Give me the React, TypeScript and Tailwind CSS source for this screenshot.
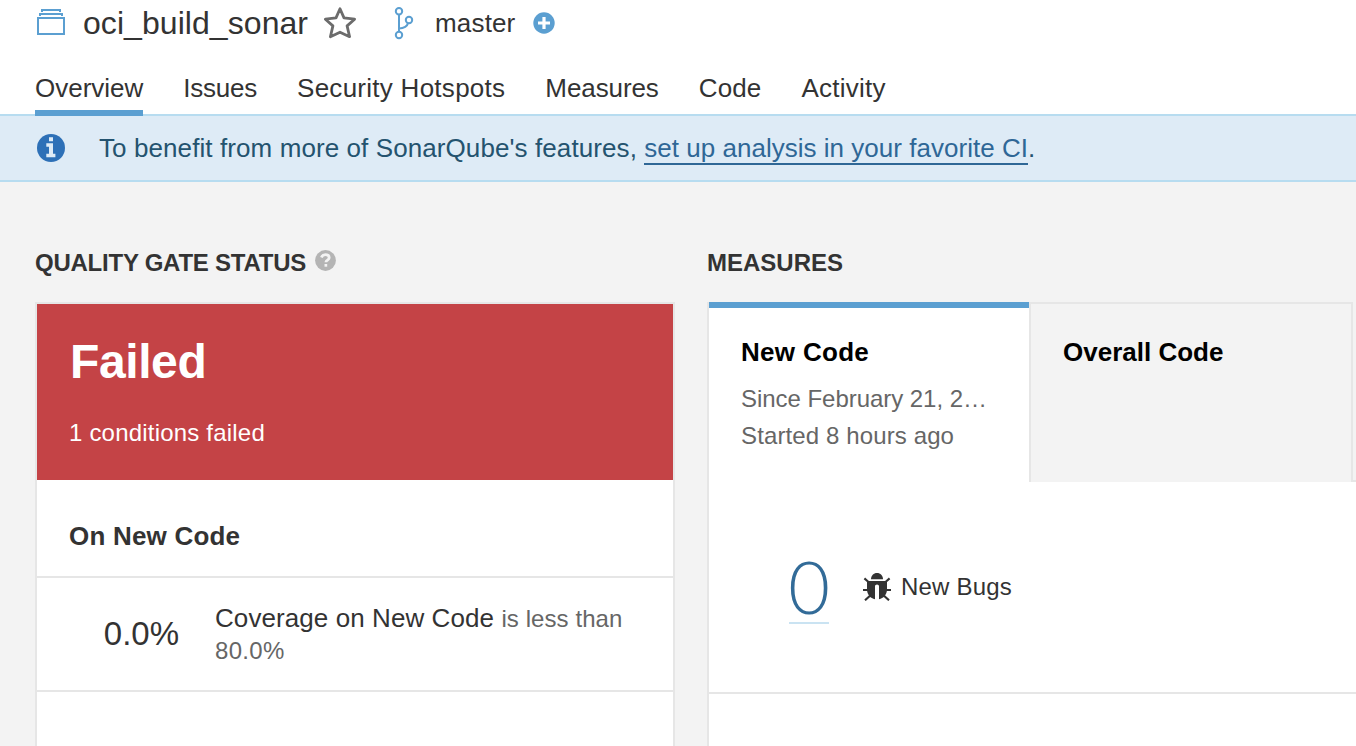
import React from "react";
import type { ReactNode } from "react";

function ProjectIcon() {
  return (
    <svg className="h-[32px] w-[32px] shrink-0" viewBox="0 0 32 32" fill="none" stroke="#5b9fd1" strokeWidth="2" shapeRendering="crispEdges">
      <path d="M3 11h26v16H3zM5 9V7h22v2M7 5V3h18v2" />
    </svg>
  );
}

function StarIcon() {
  return (
    <svg className="h-[32px] w-[34px] shrink-0" viewBox="0 0 34 32" fill="none" stroke="#6c6c6c" strokeWidth="2.8" strokeLinejoin="round">
      <path d="M17 1.700 21 10.900 31.600 12.200 24.100 18.900 26.600 29.700 17 25.200 7.400 29.700 9.900 18.900 2.400 12.200 13 10.900Z" />
    </svg>
  );
}

function BranchIcon() {
  return (
    <svg className="h-[34px] w-[20px] shrink-0" viewBox="0 0 20 34" fill="none" stroke="#5b9fd1" strokeWidth="2">
      <circle cx="5" cy="5.200" r="3.200" />
      <circle cx="5" cy="29" r="3.200" />
      <circle cx="15" cy="14" r="3.200" />
      <path d="M5 8.400V26M5 22.500C10 22.500 13.500 20 14 17" />
    </svg>
  );
}

function PlusIcon() {
  return (
    <svg className="h-[22px] w-[22px] shrink-0" viewBox="0 0 22 22">
      <circle cx="11" cy="11" r="10.700" fill="#5b9fd1" />
      <path d="M11 5v12M5 11h12" stroke="#fff" strokeWidth="3.200" />
    </svg>
  );
}

function InfoIcon() {
  return (
    <svg className="h-[28px] w-[28px] shrink-0" viewBox="0 0 28 28">
      <circle cx="14" cy="14" r="14" fill="#2d70b7" />
      <path d="M12 3.300h4v4h-4zM9.300 9.300H16v10.400h2.400v3.500H9.300v-3.500h2.700v-7H9.300z" fill="#deebf6" />
    </svg>
  );
}

function HelpIcon() {
  return (
    <svg className="h-[21px] w-[21px] shrink-0" viewBox="0 0 21 21">
      <circle cx="10.500" cy="10.500" r="10.400" fill="#b4b4b4" />
      <path d="M6.400 7.400C7.100 5.500 8.600 4.700 10.500 4.700c2 0 3.700 1.100 3.700 3 0 2.400-3.300 2.400-3.300 4.600" fill="none" stroke="#f3f3f3" strokeWidth="2.800" />
      <path d="M9.500 14h2.700v2.700H9.500z" fill="#f3f3f3" />
    </svg>
  );
}

function BugIcon() {
  return (
    <svg className="h-[28px] w-[28px] shrink-0" viewBox="0 0 28 28" fill="#333">
      <path d="M8 6.200C8 2.700 10.600 0 14 0s6 2.700 6 6.200z" />
      <path d="M4 8h20v8.500c0 5-3.600 9-8 9.700V13.200c0-1.100-.9-1.800-2-1.800s-2 .7-2 1.800v13c-4.400-.7-8-4.700-8-9.700z" />
      <path d="M1.400 5.400 5.500 9M26.600 5.400 22.500 9M0 17h5M28 17h-5M2 27.300l5-4.600M26 27.300l-5-4.600" fill="none" stroke="#333" strokeWidth="2.100" />
    </svg>
  );
}

function Tab({ children, className, active = false }: { children: ReactNode; className?: string; active?: boolean }) {
  return (
    <a className={`flex h-[50px] items-start border-b-[6px] pt-[3px] leading-[38px] ${active ? "border-[#5b9fd1]" : "border-transparent"} ${className ?? ""}`}>
      {children}
    </a>
  );
}

function Header() {
  return (
    <header className="relative z-10 flex h-[116px] flex-col justify-between pl-[35px]">
      <div className="flex h-[46px] items-center">
        <ProjectIcon />
        <h1 className="ml-4 text-[32px] leading-[46px] tracking-[0.06px]">oci_build_sonar</h1>
        <div className="ml-[15px] flex"><StarIcon /></div>
        <div className="ml-[37px] flex"><BranchIcon /></div>
        <span className="ml-[21px] tracking-[0.15px]">master</span>
        <div className="ml-[17.500px] flex"><PlusIcon /></div>
      </div>
      <nav className="flex gap-[40px]">
        <Tab active>Overview</Tab>
        <Tab className="tracking-[-0.25px]">Issues</Tab>
        <Tab className="tracking-[0.27px]">Security Hotspots</Tab>
        <Tab className="tracking-[-0.1px]">Measures</Tab>
        <Tab className="tracking-[0.15px]">Code</Tab>
        <Tab className="tracking-[0.25px]">Activity</Tab>
      </nav>
    </header>
  );
}

function Banner() {
  return (
    <div className="-mt-[2px] flex h-[68px] items-center border-y-2 border-[#b7dcf0] bg-[#deebf6] pl-[37px] text-[#24536f]">
      <InfoIcon />
      <p className="ml-[34px] tracking-[0.09px]">
        To benefit from more of SonarQube's features,{" "}
        <a className="border-b-2 border-[#2f6796] tracking-[0.02px] text-[#2f6796]">set up analysis in your favorite CI</a>.
      </p>
    </div>
  );
}

function QualityGate() {
  return (
    <section className="flex w-[640px] shrink-0 flex-col">
      <h2 className="flex h-[40px] items-center pt-[2px] text-[24px] font-bold tracking-[-0.24px]">
        QUALITY GATE STATUS
        <span className="mb-[5px] ml-[9px] flex"><HelpIcon /></span>
      </h2>
      <div className="mt-[20px] flex-1 border-x-2 border-t-2 border-[#e6e6e6] bg-white">
        <div className="h-[176px] bg-[#c44346] pl-[32px] pt-[29px] text-white">
          <div className="pl-px text-[48px] leading-[58px] font-bold tracking-[-0.4px]">Failed</div>
          <div className="mt-[24px] text-[24px] leading-[36px] tracking-[0.2px]">1 conditions failed</div>
        </div>
        <h3 className="flex h-[98px] items-center border-b-2 border-[#e6e6e6] pl-[32px] pt-[16px] font-bold tracking-[0.2px]">On New Code</h3>
        <div className="flex h-[114px] items-center border-b-2 border-[#e6e6e6]">
          <span className="w-[142px] text-right text-[33px]">0.0%</span>
          <div className="ml-[36px] tracking-[0.08px]">
            <p className="leading-[32px]">
              Coverage on New Code <span className="text-[24px] text-[#666]">is less than</span>
            </p>
            <p className="text-[24px] leading-[32px] tracking-[0.3px] text-[#666]">80.0%</p>
          </div>
        </div>
      </div>
    </section>
  );
}

function Measures() {
  return (
    <section className="flex flex-1 flex-col">
      <h2 className="flex h-[40px] items-center pt-[2px] text-[24px] font-bold">MEASURES</h2>
      <div className="mt-[20px] flex h-[180px]">
        <div className="w-[322px] border-l-2 border-[#e6e6e6] bg-white">
          <div className="h-full border-t-[6px] border-[#5b9fd1] px-[32px] pt-[25px]">
            <div className="font-bold leading-[39px] tracking-[0.3px] text-black">New Code</div>
            <div className="mt-[8px] text-[24px] leading-[37px] tracking-[-0.04px] text-[#666]">Since February 21, 2…</div>
            <div className="text-[24px] leading-[37px] tracking-[0.12px] text-[#666]">Started 8 hours ago</div>
          </div>
        </div>
        <div className="w-[324px] border-x-2 border-t-2 border-[#e6e6e6] pl-[32px] pt-[29px] font-bold leading-[39px] text-black">Overall Code</div>
        <div className="flex-1 border-b-2 border-[#e6e6e6]" />
      </div>
      <div className="flex-1 border-l-2 border-[#e6e6e6] bg-white">
        <div className="flex h-[212px] items-center border-b-2 border-[#e6e6e6] pl-[80px]">
          <a className="flex h-[73px] w-[40px] justify-center border-b-2 border-[#cae3f2] font-['Lato',sans-serif] text-[72px] leading-[70px] font-light text-[#326b98]">0</a>
          <div className="ml-[34px] flex"><BugIcon /></div>
          <span className="ml-[10px] text-[24px] tracking-[0.2px]">New Bugs</span>
        </div>
      </div>
    </section>
  );
}

export default function App() {
  return (
    <div className="flex h-[746px] w-[1356px] flex-col overflow-hidden whitespace-nowrap bg-white font-['Liberation_Sans',Arial,sans-serif] text-[26px] text-[#333]">
      <Header />
      <Banner />
      <main className="flex flex-1 gap-[32px] bg-[#f3f3f3] pl-[35px] pt-[60px]">
        <QualityGate />
        <Measures />
      </main>
    </div>
  );
}
